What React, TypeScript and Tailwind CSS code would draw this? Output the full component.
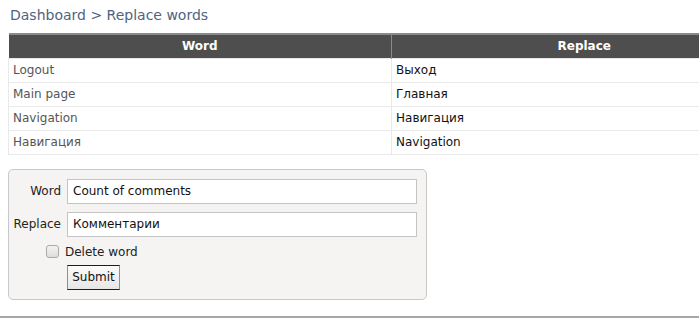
import React from "react";

const rows: [string, string][] = [
    ["Logout", "Выход"],
    ["Main page", "Главная"],
    ["Navigation", "Навигация"],
    ["Навигация", "Navigation"],
];

const Field: React.FC<{ label: string; value: string }> = ({ label, value }) => {
    return <div className="flex items-center h-[25px]">
        <label className="w-[58px] text-right pr-[6px] text-[#222]">{label}</label>
        <input
            readOnly
            value={value}
            className="w-[350px] h-[25px] border border-[#c4c4c4] bg-white px-[5px] text-[12px] text-[#111] outline-none"
        />
    </div>
}

const App: React.FC = () => {
    return <div className="w-[699px] h-[320px] overflow-hidden bg-white font-['DejaVu_Sans',sans-serif] text-[12px]">
        <div className="h-[33px] pl-[10px] pt-[5px] text-[14px] leading-[20px] text-[#4f647d]">
            Dashboard &gt; Replace words
        </div>

        <table className="ml-[8px] w-[769px] border-collapse table-fixed">
            <thead>
                <tr className="h-[24px] bg-[#4e4e4e] text-white font-bold">
                    <th className="w-[383px] border-t-2 border-[#8a8a8a] font-bold">Word</th>
                    <th className="border-t-2 border-l border-[#8a8a8a] font-bold">Replace</th>
                </tr>
            </thead>
            <tbody>
                {rows.map(([word, replace]) => (
                    <tr key={word} className="h-[24px]">
                        <td className="border border-[#e9e9e9] pl-[4px] text-[#555]">{word}</td>
                        <td className="border border-[#e9e9e9] pl-[4px] text-[#111]">{replace}</td>
                    </tr>
                ))}
            </tbody>
        </table>

        <div className="ml-[8px] mt-[14px] w-[419px] h-[131px] rounded-[5px] border border-[#c8c8c8] bg-[#f5f4f2] pt-[9px] flex flex-col">
            <Field label="Word" value="Count of comments" />
            <div className="h-[8px]" />
            <Field label="Replace" value="Комментарии" />
            <div className="flex items-center mt-[7px] pl-[37px] h-[16px] text-[#222]">
                <span className="w-[13px] h-[13px] rounded-[3px] border border-[#a9a9a9] bg-gradient-to-b from-[#f2f2f2] to-[#dedede]" />
                <span className="ml-[6px]">Delete word</span>
            </div>
            <div className="pl-[58px] mt-[5px]">
                <button className="h-[25px] w-[53px] border border-x-[#8f8f8f] border-y-[#1e1e1e] bg-gradient-to-b from-[#fbfbfb] to-[#e6e6e6] text-[#111] text-[12px]">
                    Submit
                </button>
            </div>
        </div>

        <div className="mt-[16px] h-[2px] bg-[#a7a7a7]" />
    </div>
}

export default App
